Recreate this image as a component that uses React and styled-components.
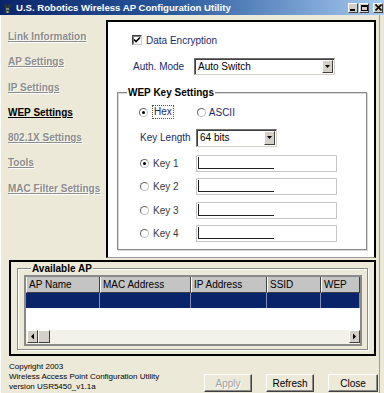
import React from 'react';
import styled, { createGlobalStyle } from 'styled-components';

const GlobalStyle = createGlobalStyle`
  html, body {
    margin: 0;
    padding: 0;
    background: #ECE9D8;
  }
`;

const Window = styled.div`
  width: 384px;
  height: 393px;
  overflow: hidden;
  display: flex;
  flex-direction: column;
  background: #ECE9D8;
  font-family: "Liberation Sans", Arial, sans-serif;
  font-size: 10px;
  color: #000;
`;

const TitleBar = styled.div`
  flex: none;
  height: 15px;
  display: flex;
  align-items: center;
  padding: 0 1px 0 2px;
  background: linear-gradient(to right, #0A246A 0%, #2A5A9E 45%, #A6CAF0 100%);
`;

const TitleText = styled.span`
  flex: 1;
  margin-left: 3px;
  color: #fff;
  font-weight: bold;
  font-size: 9.6px;
  white-space: nowrap;
`;

const CaptionButton = styled.div`
  width: 10px;
  height: 10px;
  box-sizing: border-box;
  margin-left: ${(p) => p.$gap || 0}px;
  display: flex;
  align-items: center;
  justify-content: center;
  background: #D4D0C8;
  border: 1px solid;
  border-color: #fff #404040 #404040 #fff;
`;

const Body = styled.div`
  flex: 1;
  display: flex;
  flex-direction: column;
  padding: 5px 3px 0 0;
  margin-right: 4px;
  border-left: 1px solid #fff;
  border-right: 1px solid #A19E8C;
`;

const TopRow = styled.div`
  flex: none;
  height: 238px;
  display: flex;
`;

const Nav = styled.nav`
  width: 105px;
  flex: none;
  box-sizing: border-box;
  padding: 4px 0 0 7px;
  display: flex;
  flex-direction: column;
`;

const NavLink = styled.a`
  display: block;
  line-height: 25.3px;
  font-weight: bold;
  font-size: 10px;
  text-decoration: underline;
  white-space: nowrap;
  color: ${(p) => (p.$active ? '#000' : '#8C8C8C')};
  text-shadow: ${(p) => (p.$active ? 'none' : '1px 1px 0 #fff')};
`;

const ContentPanel = styled.div`
  flex: 1;
  display: flex;
  flex-direction: column;
  background: #fff;
  border: 2px solid #000;
  border-bottom: 1px solid #9A9A9A;
`;

const Row = styled.div`
  display: flex;
  align-items: center;
  height: ${(p) => p.$h}px;
  margin-top: ${(p) => p.$mt}px;
  padding-left: ${(p) => p.$indent}px;
`;

const NavyLabel = styled.span`
  color: #1B2A6B;
  white-space: nowrap;
  width: ${(p) => (p.$w ? `${p.$w}px` : 'auto')};
  margin-left: ${(p) => p.$ml || 0}px;
  flex: none;
`;

const CheckBox = styled.span`
  width: 10px;
  height: 10px;
  box-sizing: border-box;
  flex: none;
  display: flex;
  align-items: center;
  justify-content: center;
  background: #fff;
  border: 1px solid;
  border-color: #404040 #C8C8C8 #C8C8C8 #404040;
  box-shadow: inset 1px 1px 0 #808080;
`;

const Select = styled.div`
  width: ${(p) => p.$w}px;
  height: ${(p) => p.$h}px;
  box-sizing: border-box;
  flex: none;
  display: flex;
  align-items: stretch;
  background: #fff;
  border: 1px solid;
  border-color: #707070 #D4D0C8 #D4D0C8 #707070;
  box-shadow: inset 1px 1px 0 #404040;
`;

const SelectText = styled.span`
  flex: 1;
  padding-left: 3px;
  display: flex;
  align-items: center;
  color: #000;
  white-space: nowrap;
`;

const SelectButton = styled.span`
  width: 11px;
  box-sizing: border-box;
  margin: 1px 1px 1px 0;
  display: flex;
  align-items: center;
  justify-content: center;
  background: #D4D0C8;
  border: 1px solid;
  border-color: #fff #404040 #404040 #fff;
`;

const GroupBox = styled.fieldset`
  margin: ${(p) => p.$margin};
  padding: 0 0 ${(p) => p.$pb}px 0;
  border: 1px solid #8A8A8A;
  box-shadow: ${(p) => (p.$etched ? '1px 1px 0 #fff, inset 1px 1px 0 #fff' : 'inset 1px 1px 0 #D8D8D8, 1px 1px 0 #D8D8D8')};
  min-width: 0;
  display: flex;
  flex-direction: column;
`;

const Legend = styled.legend`
  margin-left: ${(p) => p.$ml}px;
  padding: 0 1px;
  line-height: 13px;
  font-weight: bold;
  font-size: 10px;
  color: #000;
  background: ${(p) => p.$bg};
`;

const Radio = styled.span`
  width: 9px;
  height: 9px;
  box-sizing: border-box;
  flex: none;
  border-radius: 50%;
  background: #fff;
  border: 1px solid;
  border-color: #6A6A6A #C0C0C0 #C0C0C0 #6A6A6A;
  display: flex;
  align-items: center;
  justify-content: center;
  &::after {
    content: '';
    display: ${(p) => (p.$checked ? 'block' : 'none')};
    width: 3px;
    height: 3px;
    border-radius: 50%;
    background: #000;
  }
`;

const FocusLabel = styled.span`
  margin-left: 4px;
  padding: 1px 2px;
  color: #1B2A6B;
  outline: 1px dotted #555;
  outline-offset: -1px;
  line-height: 12px;
`;

const KeyList = styled.div`
  display: flex;
  flex-direction: column;
  gap: 6.3px;
  margin-top: 9px;
`;

const KeyLabel = styled.span`
  width: 43px;
  margin-left: 4px;
  flex: none;
  color: #3A3A3A;
`;

const KeyInput = styled.div`
  width: 141px;
  height: 17px;
  box-sizing: border-box;
  flex: none;
  background: #fff;
  border: 1px solid #C6C6C6;
  padding: 1px 0 2px 1px;
  display: flex;
`;

const KeyCaret = styled.span`
  width: 75px;
  border-left: 1px solid #202020;
  border-bottom: 1px solid #202020;
`;

const APPanel = styled.div`
  flex: none;
  height: 96px;
  box-sizing: border-box;
  margin: 2px 0 0 8px;
  border: 2px solid #000;
  display: flex;
  flex-direction: column;
`;

const ListView = styled.div`
  margin: 0 5px 0 6px;
  height: 71px;
  box-sizing: border-box;
  border: 2px solid #8A8A8A;
  background: #fff;
  display: flex;
  flex-direction: column;
  overflow: hidden;
`;

const Columns = styled.div`
  display: grid;
  grid-template-columns: 74px 91px 76px 54px 39px;
  flex: none;
`;

const HeaderCell = styled.div`
  height: 16px;
  box-sizing: border-box;
  line-height: 15px;
  padding-left: 2px;
  background: #C4C4C4;
  border-left: 1px solid #fff;
  border-right: 1px solid #404040;
  border-bottom: 1px solid #404040;
  white-space: nowrap;
  overflow: hidden;
`;

const SelectedCell = styled.div`
  height: 15px;
  background: #0A246A;
  border-right: 1px solid #7F8DB8;
`;

const ListFill = styled.div`
  flex: 1;
`;

const ScrollBar = styled.div`
  flex: none;
  height: 13px;
  display: flex;
  background: #F2F1EA;
  padding: 0 0 1px 1px;
`;

const ScrollButton = styled.span`
  width: ${(p) => p.$w}px;
  box-sizing: border-box;
  margin-left: ${(p) => (p.$end ? 'auto' : '0')};
  display: flex;
  align-items: center;
  justify-content: center;
  background: #D4D0C8;
  border: 1px solid;
  border-color: #fff #404040 #404040 #fff;
`;

const Footer = styled.div`
  flex: 1;
  display: flex;
  padding-left: 8px;
`;

const Copyright = styled.div`
  padding-top: 6px;
  font-size: 8px;
  line-height: 10px;
  white-space: nowrap;
`;

const ButtonRow = styled.div`
  margin: auto -2px 1px auto;
  display: flex;
  gap: 14px;
`;

const Button = styled.button`
  width: ${(p) => p.$w}px;
  height: 18px;
  box-sizing: border-box;
  padding: 0;
  font-family: "Liberation Sans", Arial, sans-serif;
  font-size: 10px;
  background: #ECE9D8;
  border: 1px solid;
  border-color: #fff #404040 #404040 #fff;
  box-shadow: inset -1px -1px 0 #8A8A8A;
  color: ${(p) => (p.disabled ? '#A0A0A0' : '#000')};
  text-shadow: ${(p) => (p.disabled ? '1px 1px 0 #fff' : 'none')};
`;

const Arrow = ({ dir }) => {
  const pts = {
    down: '1,2 6,2 3.5,5',
    left: '4,0.5 4,6.5 1,3.5',
    right: '1,0.5 1,6.5 4,3.5',
  }[dir];
  return (
    <svg width={dir === 'down' ? 7 : 5} height="7" viewBox={dir === 'down' ? '0 0 7 7' : '0 0 5 7'}>
      <polygon points={pts} fill="#000" />
    </svg>
  );
};

const AppIcon = () => (
  <svg width="11" height="12" viewBox="0 0 11 12">
    <path d="M1 1 L3 4 L4 1 L5 4 L6 4 L7 1 L8 4 L10 1 L8 6 L8 11 L3 11 L3 6 Z" fill="#2E3A2A" />
    <rect x="4" y="6" width="3" height="2" fill="#7C8A6A" />
    <rect x="4.5" y="9" width="2" height="2" fill="#9AA58A" />
  </svg>
);

const navItems = [
  'Link Information',
  'AP Settings',
  'IP Settings',
  'WEP Settings',
  '802.1X Settings',
  'Tools',
  'MAC Filter Settings',
];

const columns = ['AP Name', 'MAC Address', 'IP Address', 'SSID', 'WEP'];

function App() {
  return (
    <Window>
      <GlobalStyle />
      <TitleBar>
        <AppIcon />
        <TitleText>U.S. Robotics Wireless AP Configuration Utility</TitleText>
        <CaptionButton>
          <svg width="6" height="6" viewBox="0 0 6 6"><rect x="0" y="4" width="5" height="2" fill="#000" /></svg>
        </CaptionButton>
        <CaptionButton $gap={1}>
          <svg width="7" height="6" viewBox="0 0 7 6"><rect x="0.5" y="0.5" width="6" height="5" fill="none" stroke="#000" /><rect x="0" y="0" width="7" height="2" fill="#000" /></svg>
        </CaptionButton>
        <CaptionButton $gap={4}>
          <svg width="7" height="7" viewBox="0 0 7 7"><path d="M0.5 0.5 L6.5 6.5 M6.5 0.5 L0.5 6.5" stroke="#000" strokeWidth="1.6" /></svg>
        </CaptionButton>
      </TitleBar>

      <Body>
        <TopRow>
          <Nav>
            {navItems.map((item) => (
              <NavLink key={item} $active={item === 'WEP Settings'}>{item}</NavLink>
            ))}
          </Nav>

          <ContentPanel>
            <Row $h={12} $mt={12} $indent={24}>
              <CheckBox>
                <svg width="8" height="8" viewBox="0 0 8 8"><path d="M1 3.5 L3 5.5 L7 1.5" fill="none" stroke="#000" strokeWidth="1.6" /></svg>
              </CheckBox>
              <NavyLabel $ml={4}>Data Encryption</NavyLabel>
            </Row>

            <Row $h={17} $mt={12} $indent={25}>
              <NavyLabel $w={61}>Auth. Mode</NavyLabel>
              <Select $w={141} $h={17}>
                <SelectText>Auto Switch</SelectText>
                <SelectButton><Arrow dir="down" /></SelectButton>
              </Select>
            </Row>

            <GroupBox $margin="11px 7px 0 9px" $pb={7}>
              <Legend $ml={9} $bg="#fff">WEP Key Settings</Legend>
              <Row $h={14} $mt={6} $indent={21}>
                <Radio $checked />
                <FocusLabel>Hex</FocusLabel>
                <Radio style={{ marginLeft: 23 }} />
                <NavyLabel $ml={3}>ASCII</NavyLabel>
              </Row>
              <Row $h={17} $mt={10} $indent={22}>
                <NavyLabel $w={56}>Key Length</NavyLabel>
                <Select $w={81} $h={18}>
                  <SelectText>64 bits</SelectText>
                  <SelectButton><Arrow dir="down" /></SelectButton>
                </Select>
              </Row>
              <KeyList>
                {[1, 2, 3, 4].map((n) => (
                  <Row key={n} $h={17} $mt={0} $indent={22}>
                    <Radio $checked={n === 1} />
                    <KeyLabel>Key {n}</KeyLabel>
                    <KeyInput><KeyCaret /></KeyInput>
                  </Row>
                ))}
              </KeyList>
            </GroupBox>
          </ContentPanel>
        </TopRow>

        <APPanel>
          <GroupBox $margin="0 6px 0 6px" $pb={3} $etched>
            <Legend $ml={13} $bg="#ECE9D8">Available AP</Legend>
            <ListView>
              <Columns>
                {columns.map((c) => <HeaderCell key={c}>{c}</HeaderCell>)}
              </Columns>
              <Columns>
                {columns.map((c) => <SelectedCell key={c} />)}
              </Columns>
              <ListFill />
              <ScrollBar>
                <ScrollButton $w={11}><Arrow dir="left" /></ScrollButton>
                <ScrollButton $w={12} />
                <ScrollButton $w={11} $end><Arrow dir="right" /></ScrollButton>
              </ScrollBar>
            </ListView>
          </GroupBox>
        </APPanel>

        <Footer>
          <Copyright>
            Copyright 2003<br />
            Wireless Access Point Configuration Utility<br />
            version USR5450_v1.1a
          </Copyright>
          <ButtonRow>
            <Button $w={48} disabled>Apply</Button>
            <Button $w={48}>Refresh</Button>
            <Button $w={50}>Close</Button>
          </ButtonRow>
        </Footer>
      </Body>
    </Window>
  );
}

export default App;
